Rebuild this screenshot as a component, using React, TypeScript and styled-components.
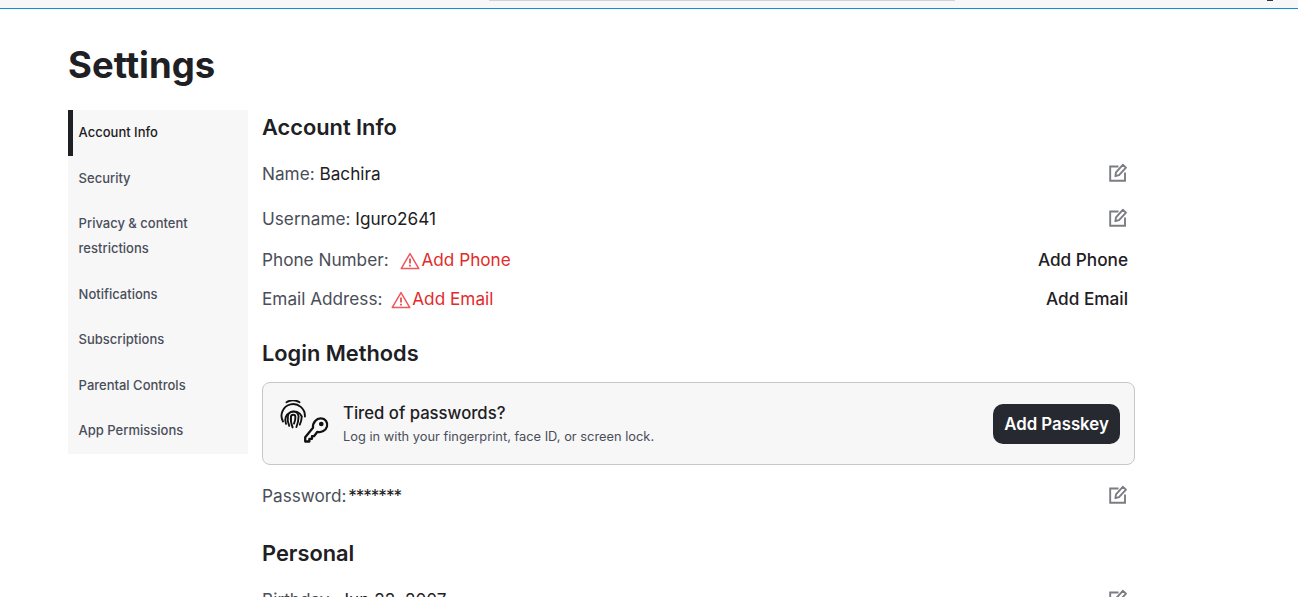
import * as React from 'react';
import styled, { createGlobalStyle } from 'styled-components';

const GlobalStyle = createGlobalStyle`
  html, body {
    margin: 0;
    height: 597px;
    overflow: hidden;
    background: #fff;
    font-family: Inter, "Noto Sans", "Liberation Sans", sans-serif;
    color: #1e2024;
  }
`;

const TopBar = styled.div`
  height: 8px;
  background: #f7f7f8;
  border-bottom: 1px solid #0b8fe2;
  position: relative;
  display: flex;
  justify-content: center;
`;

const SearchEdge = styled.div`
  width: 466px;
  height: 1px;
  background: #d0d2da;
  transform: translateX(73px);
`;

const Avatar = styled.div`
  position: absolute;
  right: 25px;
  top: 0;
  width: 6px;
  height: 1px;
  background: #2b3350;
`;

const Page = styled.div`
  padding: 0 0 0 68px;
  width: 1067px;
`;

const Title = styled.h1`
  margin: 0;
  padding-top: 35px;
  height: 66px;
  font-size: 36.5px;
  line-height: 42px;
  font-weight: 700;
  color: #1e2024;
`;

const Columns = styled.div`
  display: flex;
  align-items: flex-start;
  gap: 14px;
`;

const Sidebar = styled.nav`
  width: 180px;
  flex: none;
  background: #f7f7f8;
`;

const NavItem = styled.div<{ $active?: boolean }>`
  padding: 10.25px 20px 10.25px ${({ $active }) => ($active ? '5.6px' : '10.6px')};
  border-left: ${({ $active }) => ($active ? '5px solid #1e2024' : 'none')};
  font-size: 13px;
  line-height: 25px;
  font-weight: 500;
  color: ${({ $active }) => ($active ? '#1e2024' : '#4a4e58')};
`;

const Content = styled.main`
  flex: 1;
  min-width: 0;
`;

const SectionTitle = styled.h2<{ $top: number; $bottom: number }>`
  margin: ${({ $top }) => $top}px 0 ${({ $bottom }) => $bottom}px;
  font-size: 21.8px;
  line-height: 28px;
  font-weight: 600;
  color: #1e2024;
`;

const Row = styled.div<{ $height: number }>`
  height: ${({ $height }) => $height}px;
  display: flex;
  align-items: center;
  justify-content: space-between;
  padding-right: 7px;
  font-size: 17.2px;
`;

const Field = styled.div`
  display: flex;
  align-items: center;
  white-space: pre;
`;

const Label = styled.span`
  color: #4a4e58;
`;

const Value = styled.span`
  color: #1e2024;
`;

const SecretValue = styled(Value)`
  margin-left: -3px;
  letter-spacing: -1.1px;
`;

const Warning = styled.span<{ $offset: number }>`
  display: flex;
  align-items: center;
  gap: 1px;
  color: #e22b2b;
  margin-left: ${({ $offset }) => $offset}px;
`;

const EditButton = styled.span<{ $lift?: number }>`
  display: flex;
  margin-bottom: ${({ $lift = 2 }) => $lift}px;
  color: #7b7d82;
`;

const ActionLink = styled.span`
  font-weight: 500;
  color: #1e2024;
`;

const PasskeyCard = styled.section`
  box-sizing: border-box;
  height: 83px;
  display: flex;
  align-items: center;
  justify-content: space-between;
  padding: 0 14px 0 17px;
  background: #f7f7f8;
  border: 1px solid #c6c7ca;
  border-radius: 8px;
`;

const CardLeft = styled.div`
  display: flex;
  align-items: center;
  gap: 13px;
`;

const CardCopy = styled.div`
  margin-top: 2px;
`;

const CardHeading = styled.div`
  font-size: 16.7px;
  line-height: 24px;
  font-weight: 500;
  color: #1e2024;
`;

const CardText = styled.div`
  font-size: 12.85px;
  line-height: 24px;
  color: #4a4e58;
`;

const PasskeyButton = styled.button`
  width: 127px;
  height: 40px;
  border: 0;
  border-radius: 10px;
  background: #272930;
  color: #fff;
  font: 600 16.8px Inter, "Noto Sans", sans-serif;
  padding: 0;
`;

const PasskeyGraphic = styled.svg`
  margin-bottom: 4px;
`;

const AlertGraphic = styled.svg`
  margin-top: 3px;
`;

const EditIcon = () => (
  <svg width="20" height="20" viewBox="0 0 20 20" fill="none" stroke="currentColor" strokeWidth="1.9">
    <path d="M10.5 3.5H2.2V17.8H17V9.5" />
    <path d="M14.8 1.8L18 4.6L11 12.2L7.4 13.2L8 9.4Z" strokeLinejoin="round" />
  </svg>
);

const AlertIcon = () => (
  <AlertGraphic width="20" height="18" viewBox="0 0 20 18" fill="none" stroke="#f0565c" strokeWidth="1.5">
    <path d="M10 1.6L18.8 16.6H1.2Z" strokeLinejoin="round" />
    <path d="M10 6.5V11.6M10 12.8V14.6" stroke="#e22b2b" />
  </AlertGraphic>
);

const PasskeyIcon = () => (
  <PasskeyGraphic width="50" height="44" viewBox="0 0 50 44" fill="none" stroke="#111" strokeLinecap="round">
    <g strokeWidth="1.9">
      <path d="M6.5 2.2A13 13 0 0 1 19.5 2.2" />
      <path d="M3 21.5A11.7 11.7 0 1 1 24.9 16.5" />
      <path d="M6 23.8A8.6 8.6 0 1 1 21.8 16.5C21.6 19.5 21 22 19.8 24.6" />
      <path d="M9.2 25.8C7.6 22 7.4 18.6 7.9 16.2A5.4 5.4 0 0 1 18.6 16.5C18.5 20 17.8 23.5 16.4 27" />
      <path d="M12.6 27.4C11 23.5 10.6 19.5 11 17A2.2 2.2 0 0 1 15.4 17C15.5 19.5 14.8 21.8 14 23.6" />
    </g>
    <g strokeWidth="2.3" strokeLinejoin="round">
      <path d="M33 27.8L25.2 37.2V41.5H29.4V38.8H32V36.2H34L37.4 31.8C41.4 32.8 45.8 30.6 47 26.5C48 22.2 45.2 18.6 41.2 18.4C36.6 18 32.5 22.8 33 27.8Z" />
      <circle cx="41.3" cy="24" r="1.2" />
    </g>
  </PasskeyGraphic>
);

export default function App() {
  return (
    <>
      <GlobalStyle />
      <TopBar>
        <SearchEdge />
        <Avatar />
      </TopBar>
      <Page>
        <Title>Settings</Title>
        <Columns>
          <Sidebar>
            <NavItem $active>Account Info</NavItem>
            <NavItem>Security</NavItem>
            <NavItem>Privacy &amp; content restrictions</NavItem>
            <NavItem>Notifications</NavItem>
            <NavItem>Subscriptions</NavItem>
            <NavItem>Parental Controls</NavItem>
            <NavItem>App Permissions</NavItem>
          </Sidebar>
          <Content>
            <SectionTitle $top={3} $bottom={10}>Account Info</SectionTitle>
            <Row $height={45}>
              <Field><Label>Name: </Label><Value>Bachira</Value></Field>
              <EditButton><EditIcon /></EditButton>
            </Row>
            <Row $height={45}>
              <Field><Label>Username: </Label><Value>Iguro2641</Value></Field>
              <EditButton><EditIcon /></EditButton>
            </Row>
            <Row $height={37}>
              <Field><Label>Phone Number: </Label><Warning $offset={7}><AlertIcon />Add Phone</Warning></Field>
              <ActionLink>Add Phone</ActionLink>
            </Row>
            <Row $height={40}>
              <Field><Label>Email Address: </Label><Warning $offset={4}><AlertIcon />Add Email</Warning></Field>
              <ActionLink>Add Email</ActionLink>
            </Row>
            <SectionTitle $top={21} $bottom={15}>Login Methods</SectionTitle>
            <PasskeyCard>
              <CardLeft>
                <PasskeyIcon />
                <CardCopy>
                  <CardHeading>Tired of passwords?</CardHeading>
                  <CardText>Log in with your fingerprint, face ID, or screen lock.</CardText>
                </CardCopy>
              </CardLeft>
              <PasskeyButton>Add Passkey</PasskeyButton>
            </PasskeyCard>
            <Row $height={60}>
              <Field><Label>Password: </Label><SecretValue>*******</SecretValue></Field>
              <EditButton $lift={0}><EditIcon /></EditButton>
            </Row>
            <SectionTitle $top={14} $bottom={10}>Personal</SectionTitle>
            <Row $height={45}>
              <Field><Label>Birthday: </Label><Value>Jun 22, 2007</Value></Field>
              <EditButton><EditIcon /></EditButton>
            </Row>
          </Content>
        </Columns>
      </Page>
    </>
  );
}
